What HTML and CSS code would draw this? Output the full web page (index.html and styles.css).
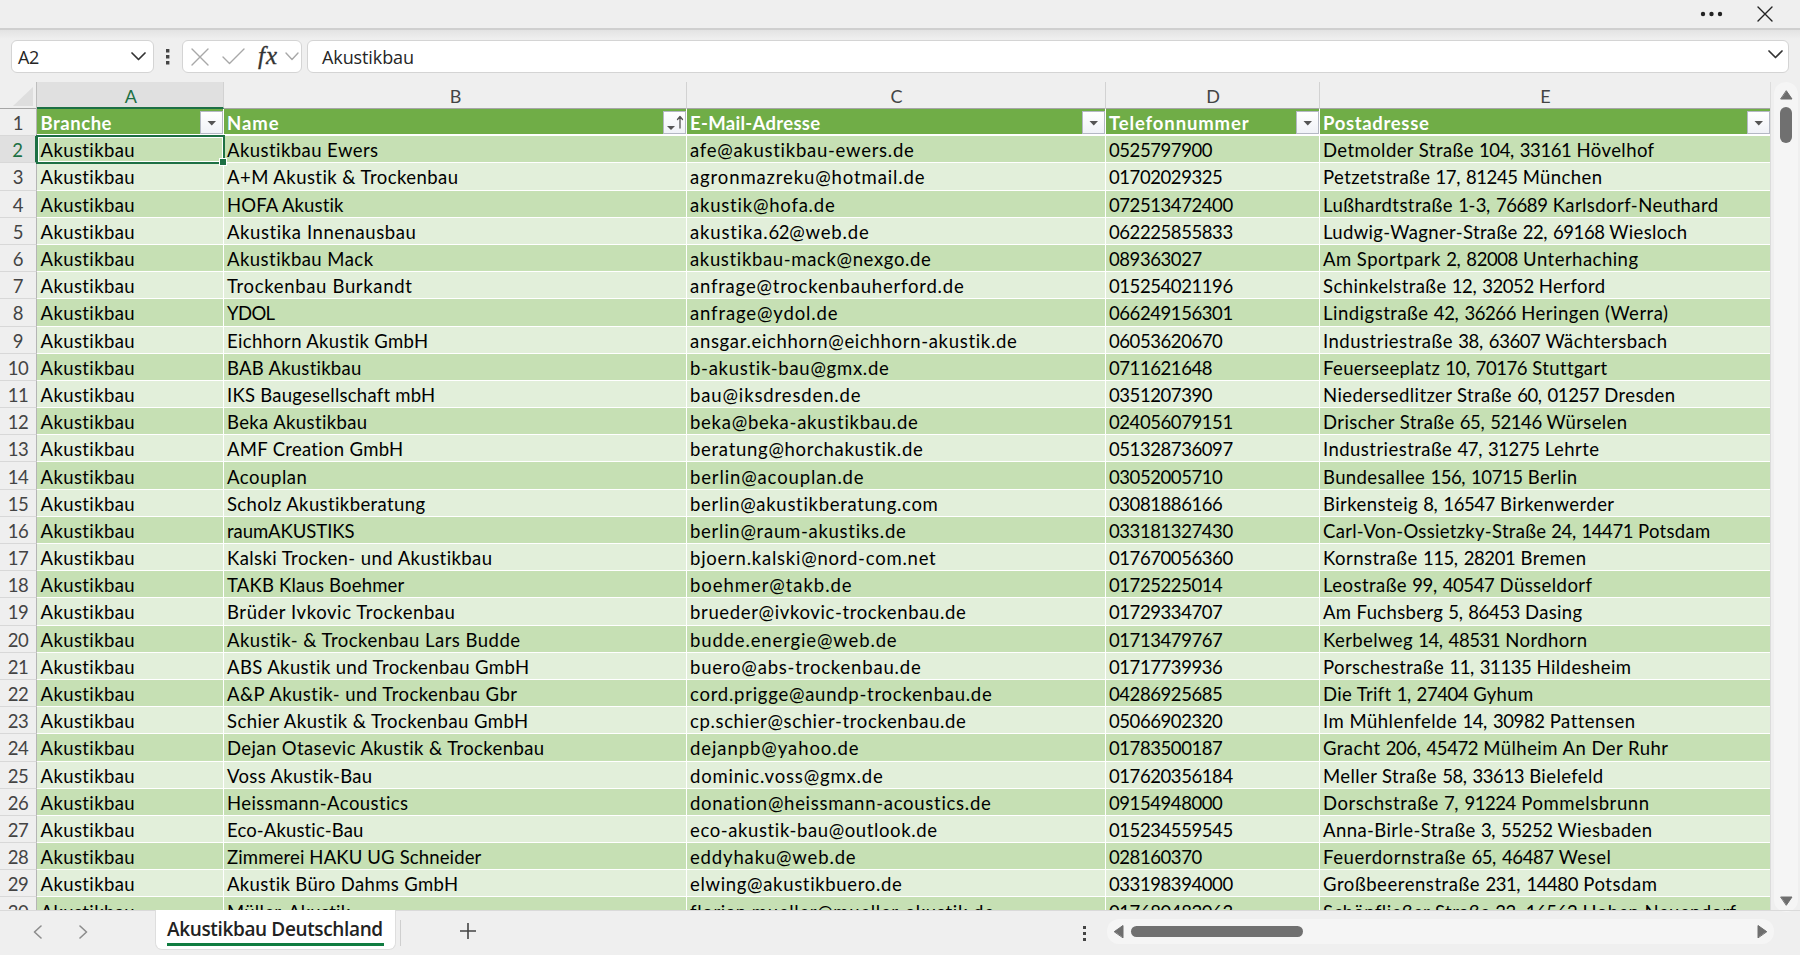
FILE: index.html
```html
<!DOCTYPE html>
<html lang="de">
<head>
<meta charset="utf-8">
<title>Akustikbau Deutschland</title>
<link rel="stylesheet" href="styles.css">
</head>
<body>
<div class="app">
  <header class="topbar">
    <svg class="more" width="24" height="6" viewBox="0 0 24 6"><circle cx="3" cy="3" r="2.2"/><circle cx="11.5" cy="3" r="2.2"/><circle cx="20" cy="3" r="2.2"/></svg>
    <svg class="close" width="16" height="16" viewBox="0 0 16 16"><path d="M1 1l14 14M15 1L1 15"/></svg>
  </header>
  <div class="formula-bar">
    <div class="box name-box"><span>A2</span><svg class="chev" width="15" height="9" viewBox="0 0 15 9"><path d="M1 1l6.5 6.5L14 1"/></svg></div>
    <svg class="grip" width="4" height="16" viewBox="0 0 4 16"><path d="M0 0h3.4v3.4H0zM0 6h3.4v3.4H0zM0 12h3.4v3.4H0z"/></svg>
    <div class="box fx-box">
      <svg class="muted" width="18" height="18" viewBox="0 0 18 18"><path d="M1 1l16 16M17 1L1 17"/></svg>
      <svg class="muted check" width="23" height="17" viewBox="0 0 23 17"><path d="M1 9l6.500 6.500L22 1"/></svg>
      <span class="fx"><i>f</i><i class="fx-x">x</i></span>
      <svg class="muted" width="14" height="9" viewBox="0 0 14 9"><path d="M1 1l6 6.500L13 1"/></svg>
    </div>
    <div class="box value-box"><span>Akustikbau</span><svg class="chev" width="15" height="9" viewBox="0 0 15 9"><path d="M1 1l6.5 6.5L14 1"/></svg></div>
  </div>
  <main class="main">
    <div class="sheet" id="sheet"></div>
    <div class="vscroll">
      <svg width="13" height="10" viewBox="0 0 13 10"><path d="M6.500 1L12 9H1z"/></svg>
      <div class="vthumb"></div>
      <svg class="down" width="13" height="10" viewBox="0 0 13 10"><path d="M6.500 9L12 1H1z"/></svg>
    </div>
  </main>
  <footer class="footer">
    <svg class="nav prev" width="9" height="14" viewBox="0 0 9 14"><path d="M8 1L1.500 7L8 13"/></svg>
    <svg class="nav next" width="9" height="14" viewBox="0 0 9 14"><path d="M1 1l6.500 6L1 13"/></svg>
    <div class="tab"><span>Akustikbau Deutschland</span></div>
    <div class="tab-sep"></div>
    <svg class="plus" width="16" height="16" viewBox="0 0 16 16"><path d="M8 0v16M0 8h16"/></svg>
    <svg class="grip tab-grip" width="4" height="16" viewBox="0 0 4 16"><path d="M0 0h3v3H0zM0 6h3v3H0zM0 12h3v3H0z"/></svg>
    <div class="hscroll">
      <svg width="10" height="13" viewBox="0 0 10 13"><path d="M0.500 6.500L9 0.500v12z"/></svg>
      <div class="hthumb"></div>
      <svg class="right" width="10" height="13" viewBox="0 0 10 13"><path d="M9.500 6.500L1 0.500v12z"/></svg>
    </div>
  </footer>
</div>
<script src="script.js"></script>
</body>
</html>
```
FILE: styles.css
```css
* { box-sizing: border-box; }
body { margin: 0; background: #efefef; font-family: Lato, Carlito, sans-serif; }
svg { display: block; flex: none; fill: none; stroke-linecap: round; stroke-linejoin: round; }
.app { width: 1800px; height: 955px; overflow: hidden; display: flex; flex-direction: column; background: #efefef; }

.topbar { flex: none; height: 30px; display: flex; justify-content: flex-end; padding: 6px 27px 0 0; border-bottom: 2px solid #cfcfcf; }
.more { fill: #222; margin: 5px 33px 0 0; }
.close { stroke: #222; stroke-width: 1.4; }

.formula-bar { flex: none; height: 52px; padding: 10px 11px 0; display: flex; align-items: flex-start; background: linear-gradient(#e3e3e3, #efefef 9px); }
.box { height: 33px; background: #fff; border: 1px solid #d4d4d4; border-radius: 6px; display: flex; align-items: center; font: 18px "Open Sans", "Noto Sans", sans-serif; color: #252525; }
.name-box { width: 143px; padding: 0 7px 0 6px; justify-content: space-between; }
.name-box span { letter-spacing: -0.3px; }
.chev { stroke: #333; stroke-width: 1.7; }
.grip { fill: #444; margin: 9px 0 0 12px; }
.fx-box { width: 120px; margin-left: 12px; padding: 0 2px 0 8px; }
.muted { stroke: #a8a8a8; stroke-width: 1.4; }
.check { margin-left: 13px; }
.fx { font: italic 25px "Liberation Serif", serif; color: #333; width: 22px; margin: -2px 7px 0 13px; white-space: nowrap; -webkit-text-stroke: 0.3px #333; }
.fx-x { margin-left: 1px; }
.value-box { flex: 1; margin-left: 5px; padding: 0 5px 0 14px; justify-content: space-between; }
.value-box span { letter-spacing: -0.1px; }
.value-box .chev { margin-top: -4px; }

.main { flex: none; height: 828px; display: flex; }
.sheet { width: 1771px; height: 828px; overflow: hidden; background: #fff; border-right: 1px solid #dcdcdc; }
.cols, .row { display: grid; grid-template-columns: 37px 186.500px 463px 419px 214px 451px; }
.cols { height: 27px; background: #efefef; border-bottom: 1px solid #a6a6a6; }
.col { display: flex; align-items: center; justify-content: center; font-size: 18px; color: #444; padding: 1px 0 0 2px; border-right: 1px solid #d2d2d2; }
.col.active { background: #e0e0e0; color: #1d7044; border-bottom: 2px solid #1d7044; height: 27px; padding-top: 2px; }
.corner { display: flex; justify-content: flex-end; align-items: flex-start; padding: 5px 3px 0 0; border-right: 1px solid #bdbdbd; }
.corner svg { fill: #dedede; }

.row { height: 27.190px; }
.num { display: flex; align-items: center; justify-content: center; background: #efefef; border-right: 1px solid #b5b5b5; border-bottom: 1px solid #d8d8d8; font-size: 18.5px; color: #444; padding-top: 2px; }
.num.active { background: #e0e0e0; color: #1d7044; border-right: 2px solid #1d7044; }
.cell { position: relative; display: flex; align-items: center; padding-left: 3.500px; font-size: 18.500px; line-height: 22px; color: #000; white-space: nowrap; border-right: 1px solid #fff; border-bottom: 1px solid #fff; background: #e2efda; padding-top: 2px; }
.digits { letter-spacing: -0.42px; }
.row.even .cell { background: #c6e0b4; }
.row.head .cell { background: #70ad47; color: #fff; font-weight: 700; justify-content: space-between; align-items: flex-start; border-bottom: 2px solid #fff; padding-top: 2px; }
.head .cell > span { margin-top: 1px; }
.filter { width: 23px; height: 23px; background: linear-gradient(#fff, #f0f2f7); border: 1px solid #b4b8c4; }
.filter svg { fill: #555; }
.selection { position: absolute; z-index: 2; left: -1px; top: -1px; right: -2px; bottom: -2px; border: 2px solid #1d7044; box-shadow: inset 0 0 0 1px #fff; }
.selection::after { content: ""; position: absolute; right: -3px; bottom: -3px; width: 6px; height: 6px; background: #1d7044; outline: 1px solid #fff; }

.vscroll { width: 24px; height: 830px; margin: 0 0 0 3px; background: #f5f5f5; border-radius: 12px; display: flex; flex-direction: column; align-items: center; padding: 8px 0 6px; }
.vscroll svg, .hscroll svg { fill: #6e6e6e; stroke: #6e6e6e; stroke-width: 1; }
.vthumb { width: 12px; height: 36px; margin-top: 7px; border-radius: 6px; background: #707070; }
.down { margin-top: auto; }

.footer { flex: none; height: 45px; display: flex; align-items: flex-start; border-top: 1px solid #dadada; }
.nav { stroke: #8c8c8c; stroke-width: 1.6; margin-top: 14px; }
.prev { margin-left: 33px; }
.next { margin-left: 37px; }
.tab { position: relative; width: 241px; height: 40px; margin: -1px 0 0 67px; padding: 7px 11px 0; background: #fff; border: 1px solid #dedede; border-top: 0; border-radius: 0 0 7px 7px; }
.tab span { display: block; height: 29px; border-bottom: 3px solid #107c41; font: 600 19px/25px "Open Sans", "Noto Sans", sans-serif; color: #222; white-space: nowrap; letter-spacing: -0.36px; }
.tab-sep { width: 1px; height: 26px; margin: 9px 0 0 4px; background: #cfcfcf; }
.plus { margin: 12px 0 0 59px; stroke: #444; stroke-width: 1.6; stroke-linecap: butt; }
.tab-grip { margin: 15px 0 0 607px; }
.hscroll { width: 667px; height: 25px; margin: 8px 0 0 20px; padding: 0 7px 0 7px; background: #f5f5f5; border-radius: 12px; display: flex; align-items: center; }
.hthumb { width: 172px; height: 11px; margin-left: 7px; border-radius: 6px; background: #707070; }
.right { margin-left: auto; }
```
FILE: script.js
```js
const rows = `Akustikbau Ewers|afe@akustikbau-ewers.de|0525797900|Detmolder Straße 104, 33161 Hövelhof
A+M Akustik & Trockenbau|agronmazreku@hotmail.de|01702029325|Petzetstraße 17, 81245 München
HOFA Akustik|akustik@hofa.de|072513472400|Lußhardtstraße 1-3, 76689 Karlsdorf-Neuthard
Akustika Innenausbau|akustika.62@web.de|062225855833|Ludwig-Wagner-Straße 22, 69168 Wiesloch
Akustikbau Mack|akustikbau-mack@nexgo.de|089363027|Am Sportpark 2, 82008 Unterhaching
Trockenbau Burkandt|anfrage@trockenbauherford.de|015254021196|Schinkelstraße 12, 32052 Herford
YDOL|anfrage@ydol.de|066249156301|Lindigstraße 42, 36266 Heringen (Werra)
Eichhorn Akustik GmbH|ansgar.eichhorn@eichhorn-akustik.de|06053620670|Industriestraße 38, 63607 Wächtersbach
BAB Akustikbau|b-akustik-bau@gmx.de|0711621648|Feuerseeplatz 10, 70176 Stuttgart
IKS Baugesellschaft mbH|bau@iksdresden.de|0351207390|Niedersedlitzer Straße 60, 01257 Dresden
Beka Akustikbau|beka@beka-akustikbau.de|024056079151|Drischer Straße 65, 52146 Würselen
AMF Creation GmbH|beratung@horchakustik.de|051328736097|Industriestraße 47, 31275 Lehrte
Acouplan|berlin@acouplan.de|03052005710|Bundesallee 156, 10715 Berlin
Scholz Akustikberatung|berlin@akustikberatung.com|03081886166|Birkensteig 8, 16547 Birkenwerder
raumAKUSTIKS|berlin@raum-akustiks.de|033181327430|Carl-Von-Ossietzky-Straße 24, 14471 Potsdam
Kalski Trocken- und Akustikbau|bjoern.kalski@nord-com.net|017670056360|Kornstraße 115, 28201 Bremen
TAKB Klaus Boehmer|boehmer@takb.de|01725225014|Leostraße 99, 40547 Düsseldorf
Brüder Ivkovic Trockenbau|brueder@ivkovic-trockenbau.de|01729334707|Am Fuchsberg 5, 86453 Dasing
Akustik- & Trockenbau Lars Budde|budde.energie@web.de|01713479767|Kerbelweg 14, 48531 Nordhorn
ABS Akustik und Trockenbau GmbH|buero@abs-trockenbau.de|01717739936|Porschestraße 11, 31135 Hildesheim
A&P Akustik- und Trockenbau Gbr|cord.prigge@aundp-trockenbau.de|04286925685|Die Trift 1, 27404 Gyhum
Schier Akustik & Trockenbau GmbH|cp.schier@schier-trockenbau.de|05066902320|Im Mühlenfelde 14, 30982 Pattensen
Dejan Otasevic Akustik & Trockenbau|dejanpb@yahoo.de|01783500187|Gracht 206, 45472 Mülheim An Der Ruhr
Voss Akustik-Bau|dominic.voss@gmx.de|017620356184|Meller Straße 58, 33613 Bielefeld
Heissmann-Acoustics|donation@heissmann-acoustics.de|09154948000|Dorschstraße 7, 91224 Pommelsbrunn
Eco-Akustic-Bau|eco-akustik-bau@outlook.de|015234559545|Anna-Birle-Straße 3, 55252 Wiesbaden
Zimmerei HAKU UG Schneider|eddyhaku@web.de|028160370|Feuerdornstraße 65, 46487 Wesel
Akustik Büro Dahms GmbH|elwing@akustikbuero.de|033198394000|Großbeerenstraße 231, 14480 Potsdam
Müller-Akustik|florian.mueller@mueller-akustik.de|017680482063|Schönfließer Straße 33, 16562 Hohen Neuendorf`
  .split("\n").map(line => ["Akustikbau", ...line.split("|")]);

// Text widths in px, by column index; letters are tracked to fill them
const textWidths = {
  1: [150, 230, 115, 188, 145, 184, 46, 200, 133, 207, 139, 175, 79, 197, 126, 264, 176, 227, 292, 301, 289, 300, 316, 144, 180, 135, 253, 230, 122],
  2: [223, 234, 144, 178, 240, 273, 147, 326, 198, 170, 227, 232, 173, 247, 215, 245, 161, 275, 206, 230, 301, 275, 168, 192, 300, 246, 165, 211, 303],
  4: [330, 278, 394, 363, 314, 281, 344, 343, 283, 351, 303, 275, 253, 290, 386, 262, 268, 258, 263, 307, 209, 311, 344, 279, 325, 328, 287, 333, 412]
};
const headWidths = [70, 51, 129, 139, 105];

const add = (parent, className, text = "") => {
  const el = document.createElement("div");
  el.className = className;
  if (text) {
    const label = document.createElement("span");
    text.split(/(\d+)/).filter(Boolean).forEach(part => {
      if (/^\d/.test(part)) {
        const digits = document.createElement("span");
        digits.className = "digits";
        digits.textContent = part;
        label.append(digits);
      } else {
        label.append(part);
      }
    });
    el.append(label);
  }
  parent.append(el);
  return el;
};

const track = (cell, width) => {
  const label = cell.firstChild;
  const letters = label.textContent.replace(/\d/g, "").length;
  // A first nonzero value switches ligatures off before measuring
  label.style.letterSpacing = "0.1px";
  const natural = label.getBoundingClientRect().width - 0.1 * letters;
  label.style.letterSpacing = ((width + 1.5 - natural) / letters).toFixed(3) + "px";
};

const sheet = document.getElementById("sheet");

// Column letters
const cols = add(sheet, "cols");
add(cols, "corner").innerHTML = '<svg width="20" height="19" viewBox="0 0 20 19"><path d="M20 0v19H0z"/></svg>';
["A", "B", "C", "D", "E"].forEach((c, i) => add(cols, i ? "col" : "col active", c));

// Table header with filter buttons
const head = add(sheet, "row head");
add(head, "num", "1");
["Branche", "Name", "E-Mail-Adresse", "Telefonnummer", "Postadresse"].forEach((title, i) => {
  const cell = add(head, "cell", title);
  track(cell, headWidths[i]);
  add(cell, "filter").innerHTML = i === 1
    ? '<svg width="21" height="21" viewBox="0 0 21 21"><path d="M3 14h8l-4 4z"/><path d="M16 16V5M13.500 7.500L16 4.500l2.500 3" fill="none" stroke="#555" stroke-width="1.300"/></svg>'
    : '<svg width="21" height="21" viewBox="0 0 21 21"><path d="M6.500 9h8.500l-4.250 4.500z"/></svg>';
});

rows.forEach((values, r) => {
  const row = add(sheet, r % 2 ? "row" : "row even");
  add(row, r ? "num" : "num active", String(r + 2));
  values.forEach((value, i) => {
    const cell = add(row, "cell", value);
    if (i === 0) track(cell, 93);
    if (textWidths[i]) track(cell, textWidths[i][r]);
  });
  if (r === 0) add(row.children[1], "selection");
});
```
